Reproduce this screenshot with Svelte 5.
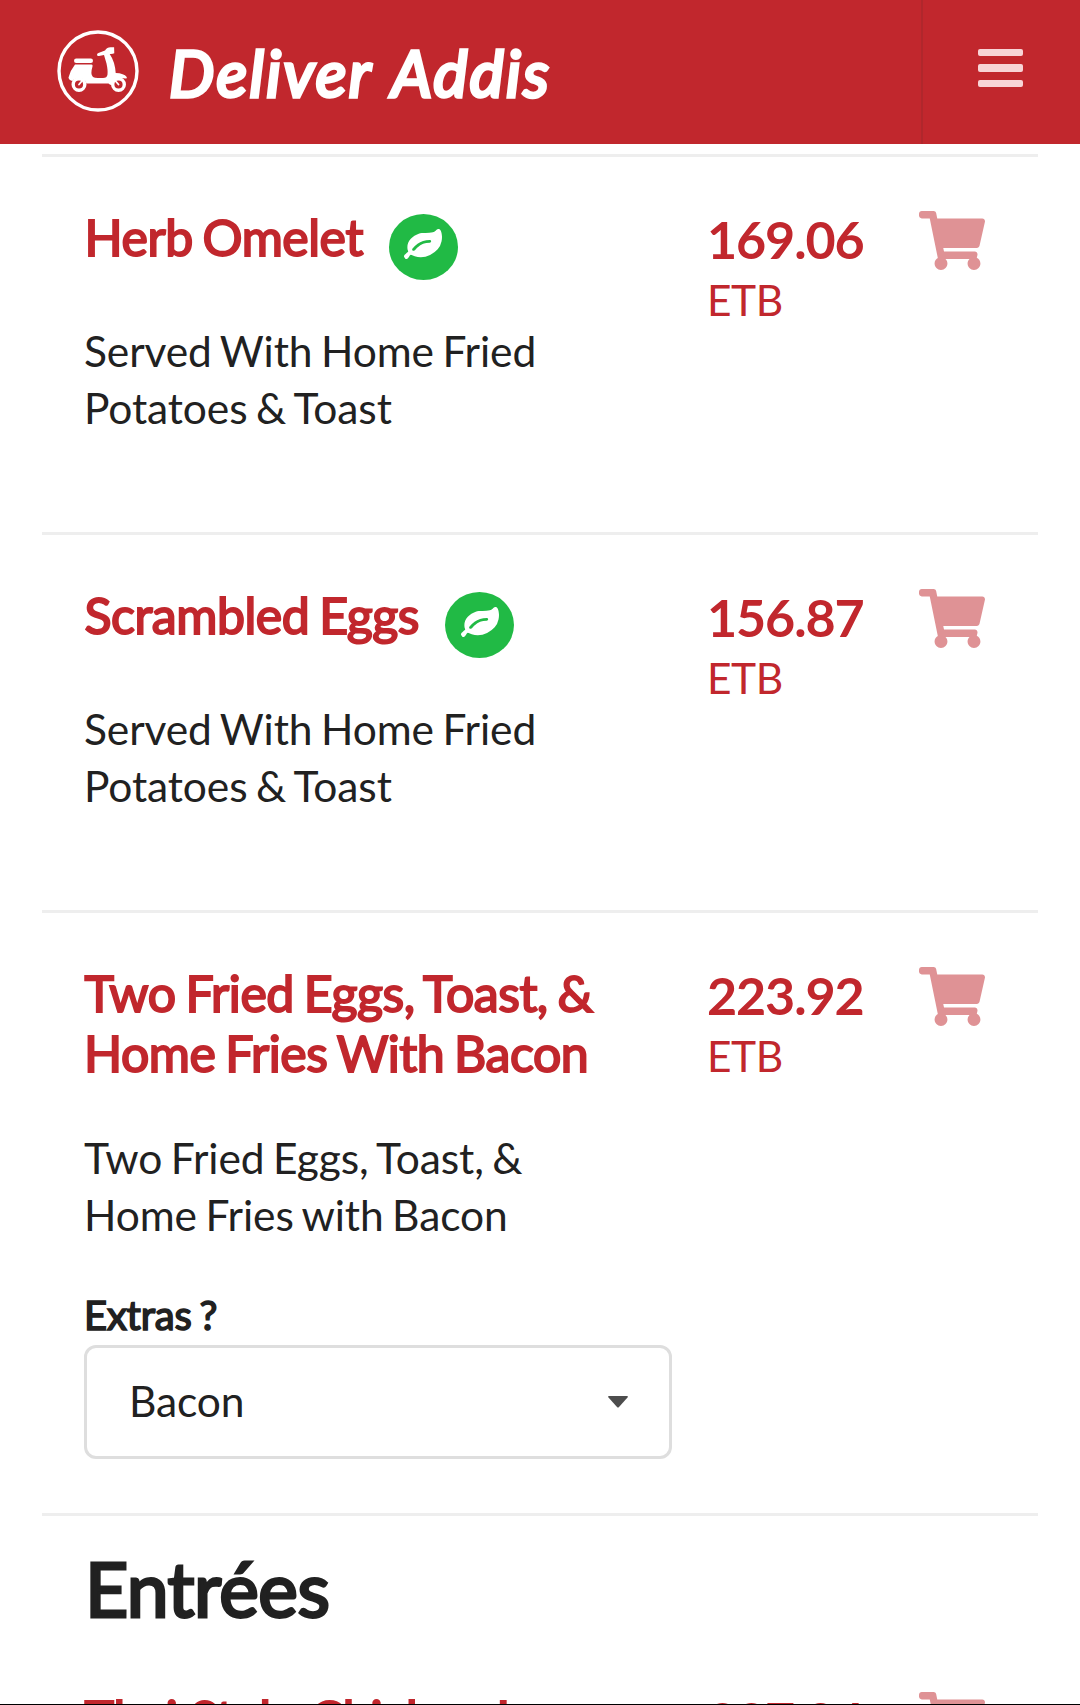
<script>
  const items = [
    {id:"herb", title:"Herb Omelet", veg:true, price:"169.06", text:"Served With Home Fried Potatoes & Toast"},
    {id:"scrambled", title:"Scrambled Eggs", veg:true, price:"156.87", text:"Served With Home Fried Potatoes & Toast"},
    {id:"fried", title:"Two Fried Eggs, Toast, & Home Fries With Bacon", price:"223.92", text:"Two Fried Eggs, Toast, & Home Fries with Bacon", extra:"Bacon"},
  ];
  const entrees = [
    {id:"thai", title:"Thai Style Chicken L", price:"227.04", text:""},
  ];
</script>

{#snippet dish(item)}
  <article class="item" class:has_extra={item.extra}>
    <div class="info">
      <h3>{item.title}{#if item.veg}<span class="veg"><svg viewBox="0 128 1792 1408" preserveAspectRatio="none"><path d="M1280 704q0-26-19-45t-45-19q-172 0-318 49.5t-259.5 134-235.5 219.5q-19 21-19 45 0 26 19 45t45 19q24 0 45-19 27-24 74-71t67-66q137-124 268.5-176t313.5-52q26 0 45-19t19-45zm512-198q0 95-20 193-46 224-184.5 383t-357.5 268q-214 108-438 108-148 0-286-47-15-5-88-42t-96-37q-16 0-39.5 32t-45 70-52.5 70-60 32q-43 0-63.5-17.5t-45.5-59.5q-2-4-6-11t-5.5-10-3-9.5-1.5-13.5q0-35 31-73.5t68-65.5 68-56 31-48q0-4-14-38t-16-44q-9-51-9-104 0-115 43.5-220t119-184.5 170.5-139 204-95.5q55-18 145-25.5t179.5-9 178.5-6 163.5-24 113.5-56.5l29.5-29.5 29.5-28 27-20 36.5-16 43.5-4.5q39 0 70.5 46t47.5 112 24 124 8 96z"/></svg></span>{/if}</h3>
      <p>{item.text}</p>
      {#if item.extra}
        <div class="label">Extras ?</div>
        <div class="dropdown">
          <span>{item.extra}</span>
          <svg viewBox="0 0 20 12"><path d="M1 0h18q1.500 0 .5 1.500l-8.500 9.500q-1 1-2 0l-8.500-9.500q-1-1.500.5-1.500z"/></svg>
        </div>
      {/if}
    </div>
    <div class="price"><b>{item.price}</b><span>ETB</span></div>
    <svg class="cart" viewBox="0 0 576 512" preserveAspectRatio="none"><path d="M528.12 301.319l47.273-208C578.806 78.301 567.391 64 551.99 64H159.208l-9.166-44.81C147.758 8.021 137.93 0 126.529 0H24C10.745 0 0 10.745 0 24v16c0 13.255 10.745 24 24 24h69.883l70.248 343.435C147.325 417.1 136 435.222 136 456c0 30.928 25.072 56 56 56s56-25.072 56-56c0-15.674-6.447-29.835-16.824-40h209.647C430.447 426.165 424 440.326 424 456c0 30.928 25.072 56 56 56s56-25.072 56-56c0-22.172-12.888-41.332-31.579-50.405l5.517-24.276c3.413-15.018-8.002-29.319-23.403-29.319H218.117l-6.545-32h293.145c11.206 0 20.92-7.754 23.403-18.681z"/></svg>
  </article>
{/snippet}

<div class="page">
  <header>
    <svg class="logo" viewBox="0 0 82 82">
      <circle cx="41" cy="41" r="39" fill="none" stroke="#fff" stroke-width="3.400"/>
      <g fill="#fff">
        <rect x="17" y="28.500" width="19" height="4.500" rx="2.200"/>
        <path d="M18 34.500h16.500q1.500 0 1 2-2.500 8 .5 10.500 1.500 1 5 1h5q4 0 4.500-3.500.5-4-1-11l-2.500-8.500-5 1q-2 .2-2-1.300 0-1.200 2-1.900l6-2.200q2-3.300 5.500-3.300h3.600l.2 6q-1.800 1-4.600.7 5.200 7.500 6 19 8.300.3 11 4 .8 1.600-1 1.600l-5-.6q-5.500-.4-8.200 6-1.500 2-4-.5l-22 .1q-2-5.500-7.500-5.500-4.500 0-6.500 3-3.700-.8-4-3.600Q13.500 40 18 34.500z"/>
      </g>
      <g fill="#c1272d" stroke="#fff" stroke-width="3.400">
        <circle cx="22" cy="54.500" r="5.800"/>
        <circle cx="61.500" cy="54.500" r="5.800"/>
      </g>
      <path d="M22 54.500l2.500-3M61.500 54.500l-3-3.500" stroke="#fff" stroke-width="1.800" stroke-linecap="round"/>
    </svg>
    <span class="brand">Deliver Addis</span>
    <div class="menu"><i></i><i></i><i></i></div>
  </header>
  <main>
    {#each items as item (item.id)}
      {@render dish(item)}
    {/each}
    <h2>Entrées</h2>
    {#each entrees as item (item.id)}
      {@render dish(item)}
    {/each}
  </main>
  <div class="bottom_edge"></div>
</div>

<style>
:global(body) {
  background: #fff;
}

.page {
  height: 1705px;
  overflow: hidden;
  display: flex;
  flex-direction: column;
  font-family: Lato, "Liberation Sans", sans-serif;
  font-size: 42.500px;
  letter-spacing: -0.1px;
  word-spacing: -2.200px;
  color: #212121;
}

header {
  flex: none;
  height: 144px;
  background: #c1272d;
  display: flex;
  align-items: flex-start;
}

.logo {
  flex: none;
  width: 82px;
  height: 82px;
  margin: 30px 0 0 57px;
}

.brand {
  margin: 33px 0 0 30px;
  font-size: 64px;
  line-height: 80px;
  font-style: italic;
  letter-spacing: 2.400px;
  word-spacing: 4px;
  color: #fff;
  white-space: nowrap;
  -webkit-text-stroke: 3.500px #fff;
}

.menu {
  box-sizing: border-box;
  width: 159px;
  height: 144px;
  margin-left: auto;
  padding: 48.500px 0 0 55px;
  border-left: 2px solid #b0272c;
}

.menu i {
  display: block;
  width: 45px;
  height: 7.500px;
  margin-bottom: 8px;
  border-radius: 2px;
  background: #f8d4d6;
}

main {
  flex: 1;
  min-height: 0;
  padding: 10px 42px 0;
  overflow: hidden;
}

.item {
  display: flex;
  align-items: flex-start;
  box-sizing: border-box;
  height: 378px;
  border-top: 3px solid #eee;
  padding: 50px 0 0 42px;
}

.item.has_extra {
  height: 603px;
}

.info {
  width: 588px;
}

h3 {
  width: 530px;
  margin: 0 0 46px;
  font-size: 50px;
  line-height: 60px;
  font-weight: normal;
  letter-spacing: -0.450px;
  word-spacing: -2.500px;
  text-indent: 0.5px;
  color: #c1272d;
  -webkit-text-stroke: 2px #c1272d;
}

.veg {
  display: inline-flex;
  align-items: center;
  justify-content: center;
  width: 69px;
  height: 66px;
  margin: 0 0 -4px 26px;
  vertical-align: -2.500px;
  border-radius: 50%;
  background: #21ba45;
}

.veg svg {
  width: 38px;
  height: 30px;
  margin-bottom: 7px;
  fill: #fff;
}

p {
  width: 470px;
  margin: 0;
  line-height: 57px;
}

.label {
  margin-top: 48px;
  font-size: 40px;
  line-height: 48px;
  letter-spacing: -0.2px;
  -webkit-text-stroke: 1.600px #212121;
}

.dropdown {
  display: flex;
  align-items: center;
  justify-content: space-between;
  box-sizing: border-box;
  height: 114px;
  margin-top: 6px;
  padding: 0 41px 0 42px;
  border: 3px solid #dedede;
  border-radius: 12px;
}

.dropdown span {
  margin-bottom: 3px;
}

.dropdown svg {
  width: 20px;
  height: 12px;
  fill: #4d4d4d;
}

.price {
  width: 212px;
  margin-left: 35px;
  color: #c1272d;
}

.price b {
  display: block;
  font-size: 52px;
  line-height: 64px;
  letter-spacing: -1.100px;
}

.price span {
  display: block;
  line-height: 58px;
  letter-spacing: -0.5px;
}

.cart {
  width: 66px;
  height: 59px;
  margin-top: 4px;
  fill: #c1272d;
  opacity: 0.5;
}

h2 {
  box-sizing: border-box;
  margin: 0;
  padding: 26px 0 0 43px;
  height: 123px;
  border-top: 3px solid #eee;
  font-size: 75px;
  line-height: 92px;
  font-weight: normal;
  letter-spacing: -0.5px;
  -webkit-text-stroke: 3px #212121;
}

h2 + .item {
  border-top: none;
  padding-top: 52px;
}

h2 + .item h3 {
  letter-spacing: -0.2px;
  word-spacing: 0;
}

.bottom_edge {
  flex: none;
  height: 1px;
  background: #000;
}
</style>
